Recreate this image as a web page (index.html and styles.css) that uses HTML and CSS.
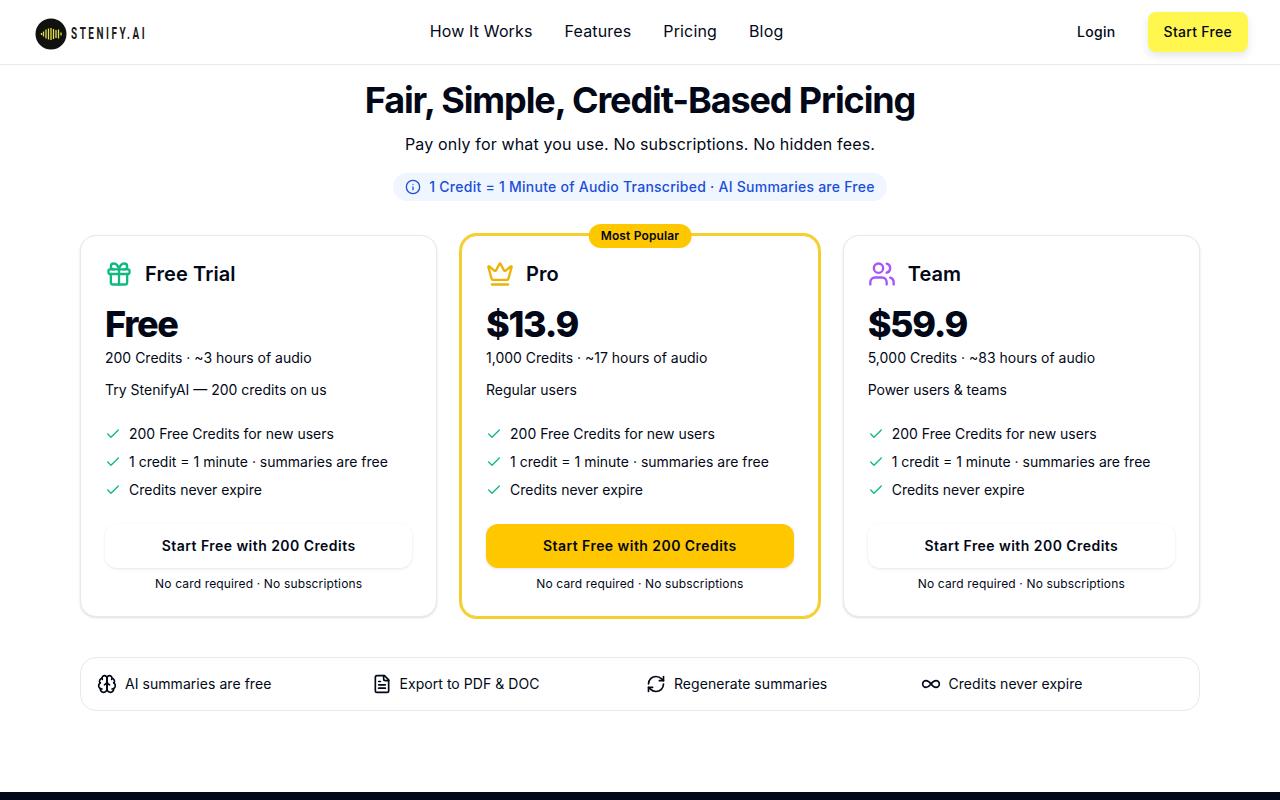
FILE: index.html
```html
<!doctype html>
<html lang="en">
  <head>
    <meta charset="UTF-8" />
    <meta name="viewport" content="width=device-width, initial-scale=1.0" />
    <title>Stenify.AI - Pricing</title>
    <link rel="stylesheet" href="styles.css">
  </head>
  <body>
    <header class="site-header">
      <a class="logo" href="#">
        <svg class="logo-mark" viewBox="0 0 32 32" width="32" height="32">
          <circle cx="16" cy="16" r="15.5" fill="#111110" />
          <path d="M6.500 15v2M8.500 13.500v5M11 11.500v9M13.500 10.500v11M16 10v12M18.500 11v10M21 12v8M23.500 11.500v9M26 14.500v3" stroke="#e6e24c" stroke-width="1.300" fill="none" />
        </svg>
        <span class="logo-text">STENIFY.AI</span>
      </a>
      <nav class="main-nav">
        <a href="#">How It Works</a>
        <a href="#">Features</a>
        <a href="#">Pricing</a>
        <a href="#">Blog</a>
      </nav>
      <div class="header-actions">
        <a class="login" href="#">Login</a>
        <a class="start-free" href="#">Start Free</a>
      </div>
    </header>

    <main class="pricing">
      <h1 class="pricing-title">Fair, Simple, Credit-Based Pricing</h1>
      <p class="pricing-sub">Pay only for what you use. No subscriptions. No hidden fees.</p>
      <div class="pill-row">
        <div class="info-pill">
          <svg class="icon icon-16" viewBox="0 0 24 24"><circle cx="12" cy="12" r="10" /><path d="M12 16v-4" /><path d="M12 8h.01" /></svg>
          <span class="pill-text">1 Credit = 1 Minute of Audio Transcribed · AI Summaries are Free</span>
        </div>
      </div>

      <div class="plans">
        <section class="plan">
          <div class="plan-head">
            <svg class="icon plan-icon green" viewBox="0 0 24 24"><rect x="3" y="8" width="18" height="4" rx="1" /><path d="M12 8v13" /><path d="M19 12v7a2 2 0 0 1-2 2H7a2 2 0 0 1-2-2v-7" /><path d="M7.500 8a2.500 2.500 0 0 1 0-5A4.800 8 0 0 1 12 8a4.800 8 0 0 1 4.500-5 2.500 2.500 0 0 1 0 5" /></svg>
            <h2>Free Trial</h2>
          </div>
          <div class="price">Free</div>
          <div class="credits">200 Credits · ~3 hours of audio</div>
          <div class="audience">Try StenifyAI — 200 credits on us</div>
          <ul class="perks">
            <li><svg class="icon icon-16 check" viewBox="0 0 24 24"><path d="M20 6 9 17l-5-5" /></svg>200 Free Credits for new users</li>
            <li><svg class="icon icon-16 check" viewBox="0 0 24 24"><path d="M20 6 9 17l-5-5" /></svg>1 credit = 1 minute · summaries are free</li>
            <li><svg class="icon icon-16 check" viewBox="0 0 24 24"><path d="M20 6 9 17l-5-5" /></svg>Credits never expire</li>
          </ul>
          <a class="plan-btn" href="#">Start Free with 200 Credits</a>
          <div class="plan-note">No card required · No subscriptions</div>
        </section>

        <section class="plan plan-pro">
          <span class="badge">Most Popular</span>
          <div class="plan-head">
            <svg class="icon plan-icon amber" viewBox="0 0 24 24"><path d="M11.562 3.266a.5.5 0 0 1 .876 0L15.390 8.870a1 1 0 0 0 1.516.294L21.183 5.500a.5.5 0 0 1 .798.519l-2.834 10.246a1 1 0 0 1-.956.734H5.810a1 1 0 0 1-.957-.734L2.020 6.020a.5.5 0 0 1 .798-.519l4.276 3.664a1 1 0 0 0 1.516-.294z" /><path d="M5 21h14" /></svg>
            <h2>Pro</h2>
          </div>
          <div class="price">$13.9</div>
          <div class="credits">1,000 Credits · ~17 hours of audio</div>
          <div class="audience">Regular users</div>
          <ul class="perks">
            <li><svg class="icon icon-16 check" viewBox="0 0 24 24"><path d="M20 6 9 17l-5-5" /></svg>200 Free Credits for new users</li>
            <li><svg class="icon icon-16 check" viewBox="0 0 24 24"><path d="M20 6 9 17l-5-5" /></svg>1 credit = 1 minute · summaries are free</li>
            <li><svg class="icon icon-16 check" viewBox="0 0 24 24"><path d="M20 6 9 17l-5-5" /></svg>Credits never expire</li>
          </ul>
          <a class="plan-btn plan-btn-primary" href="#">Start Free with 200 Credits</a>
          <div class="plan-note">No card required · No subscriptions</div>
        </section>

        <section class="plan">
          <div class="plan-head">
            <svg class="icon plan-icon purple" viewBox="0 0 24 24"><path d="M16 21v-2a4 4 0 0 0-4-4H6a4 4 0 0 0-4 4v2" /><circle cx="9" cy="7" r="4" /><path d="M22 21v-2a4 4 0 0 0-3-3.870" /><path d="M16 3.130a4 4 0 0 1 0 7.750" /></svg>
            <h2>Team</h2>
          </div>
          <div class="price">$59.9</div>
          <div class="credits">5,000 Credits · ~83 hours of audio</div>
          <div class="audience">Power users &amp; teams</div>
          <ul class="perks">
            <li><svg class="icon icon-16 check" viewBox="0 0 24 24"><path d="M20 6 9 17l-5-5" /></svg>200 Free Credits for new users</li>
            <li><svg class="icon icon-16 check" viewBox="0 0 24 24"><path d="M20 6 9 17l-5-5" /></svg>1 credit = 1 minute · summaries are free</li>
            <li><svg class="icon icon-16 check" viewBox="0 0 24 24"><path d="M20 6 9 17l-5-5" /></svg>Credits never expire</li>
          </ul>
          <a class="plan-btn" href="#">Start Free with 200 Credits</a>
          <div class="plan-note">No card required · No subscriptions</div>
        </section>
      </div>

      <div class="features">
        <div class="feature">
          <svg class="icon icon-20" viewBox="0 0 24 24"><path d="M12 5a3 3 0 1 0-5.997.125 4 4 0 0 0-2.526 5.770 4 4 0 0 0 .556 6.588A4 4 0 1 0 12 18Z" /><path d="M12 5a3 3 0 1 1 5.997.125 4 4 0 0 1 2.526 5.770 4 4 0 0 1-.556 6.588A4 4 0 1 1 12 18Z" /><path d="M15 13a4.500 4.500 0 0 1-3-4 4.500 4.500 0 0 1-3 4" /><path d="M17.599 6.500a3 3 0 0 0 .399-1.375" /><path d="M6.003 5.125A3 3 0 0 0 6.401 6.500" /><path d="M3.477 10.896a4 4 0 0 1 .585-.396" /><path d="M19.938 10.500a4 4 0 0 1 .585.396" /><path d="M6 18a4 4 0 0 1-1.967-.516" /><path d="M19.967 17.484A4 4 0 0 1 18 18" /></svg>
          <span>AI summaries are free</span>
        </div>
        <div class="feature">
          <svg class="icon icon-20" viewBox="0 0 24 24"><path d="M15 2H6a2 2 0 0 0-2 2v16a2 2 0 0 0 2 2h12a2 2 0 0 0 2-2V7Z" /><path d="M14 2v4a2 2 0 0 0 2 2h4" /><path d="M10 9H8" /><path d="M16 13H8" /><path d="M16 17H8" /></svg>
          <span>Export to PDF &amp; DOC</span>
        </div>
        <div class="feature">
          <svg class="icon icon-20" viewBox="0 0 24 24"><path d="M3 12a9 9 0 0 1 9-9 9.750 9.750 0 0 1 6.740 2.740L21 8" /><path d="M21 3v5h-5" /><path d="M21 12a9 9 0 0 1-9 9 9.750 9.750 0 0 1-6.740-2.740L3 16" /><path d="M8 16H3v5" /></svg>
          <span>Regenerate summaries</span>
        </div>
        <div class="feature">
          <svg class="icon icon-20" viewBox="0 0 24 24"><path d="M12 12c-2-2.670-4-4-6-4a4 4 0 1 0 0 8c2 0 4-1.330 6-4Zm0 0c2 2.670 4 4 6 4a4 4 0 0 0 0-8c-2 0-4 1.330-6 4Z" /></svg>
          <span>Credits never expire</span>
        </div>
      </div>
    </main>

    <footer class="site-footer"></footer>
  </body>
</html>
```

FILE: styles.css
```css
* {
  box-sizing: border-box;
}

body {
  margin: 0;
  background: #fff;
  color: #020817;
  font-family: Inter, 'Liberation Sans', sans-serif;
}

a {
  color: inherit;
  text-decoration: none;
}

.icon {
  flex: none;
  fill: none;
  stroke: currentColor;
  stroke-width: 2;
  stroke-linecap: round;
  stroke-linejoin: round;
}

.icon-16 {
  width: 16px;
  height: 16px;
}

.icon-20 {
  width: 20px;
  height: 20px;
}

/* header */
.site-header {
  height: 65px;
  padding: 0 32px;
  display: flex;
  align-items: center;
  justify-content: space-between;
  border-bottom: 1px solid #e7e9ed;
  background: #fff;
}

.logo {
  width: 120px;
  display: flex;
  align-items: center;
  gap: 4px;
  padding: 3px 0 0 3px;
}

.logo-mark {
  flex: none;
}

.logo-text {
  font-family: Roboto, 'Liberation Sans', sans-serif;
  font-size: 16px;
  font-weight: 700;
  letter-spacing: 4.1px;
  color: #1b1b1b;
  white-space: nowrap;
  transform: scaleX(0.62);
  transform-origin: left center;
}

.main-nav {
  display: flex;
  gap: 32px;
  font-size: 16px;
  letter-spacing: 0.15px;
  margin-top: -2px;
}

.header-actions {
  display: flex;
  align-items: center;
  gap: 16px;
  font-size: 14px;
  font-weight: 500;
  letter-spacing: 0.3px;
}

.login {
  padding: 0 16px;
  line-height: 40px;
}

.start-free {
  height: 40px;
  padding: 0 16px;
  line-height: 40px;
  border-radius: 8px;
  background: #fff74d;
  box-shadow: 0 4px 10px rgba(0, 0, 0, 0.1);
}

/* pricing */
.pricing {
  width: 1120px;
  margin: 0 auto;
  padding-top: 15px;
}

.pricing-title {
  margin: 0;
  font-size: 36px;
  line-height: 40px;
  font-weight: 700;
  letter-spacing: -1.1px;
  text-align: center;
}

.pricing-sub {
  margin: 12px 0 0;
  font-size: 16px;
  line-height: 24px;
  letter-spacing: 0.15px;
  text-align: center;
}

.pill-row {
  display: flex;
  justify-content: center;
  margin-top: 17px;
}

.info-pill {
  height: 28px;
  padding: 0 12px;
  display: flex;
  align-items: center;
  gap: 8px;
  border-radius: 14px;
  background: #eff6ff;
  color: #1d4ed8;
  font-size: 14px;
  font-weight: 500;
  letter-spacing: 0.25px;
}

.pill-text {
  margin-top: -1px;
}

.plans {
  display: grid;
  grid-template-columns: repeat(3, 1fr);
  gap: 24px;
  margin-top: 34px;
}

.plan {
  position: relative;
  padding: 24px;
  border: 1px solid #e7e9ed;
  border-radius: 16px;
  background: #fff;
  box-shadow: 0 1px 3px rgba(0, 0, 0, 0.1), 0 1px 2px -1px rgba(0, 0, 0, 0.1);
}

.plan-pro {
  padding-left: 23.7px;
  border-color: #f5cf2e;
  box-shadow: 0 0 0 2px #f5cf2e;
}

.badge {
  position: absolute;
  top: -12px;
  left: 50%;
  transform: translateX(-50%);
  height: 24px;
  padding: 0 12px;
  border-radius: 12px;
  background: #ffc700;
  font-size: 12px;
  font-weight: 600;
  line-height: 24px;
  letter-spacing: 0.15px;
  white-space: nowrap;
}

.plan-head {
  display: flex;
  align-items: center;
  gap: 12px;
  height: 28px;
}

.plan-head h2 {
  margin: 0;
  font-size: 20px;
  font-weight: 600;
  line-height: 28px;
  letter-spacing: 0.1px;
}

.plan-icon {
  width: 28px;
  height: 28px;
}

.green {
  color: #10b981;
}

.amber {
  color: #eab308;
}

.purple {
  color: #a855f7;
}

.price {
  margin-top: 16px;
  font-size: 36px;
  line-height: 40px;
  font-weight: 800;
  letter-spacing: -1.3px;
}

.credits {
  margin-top: 4px;
  font-size: 14px;
  line-height: 20px;
}

.audience {
  margin-top: 12px;
  font-size: 14px;
  line-height: 20px;
}

.perks {
  list-style: none;
  margin: 24px 0 0;
  padding: 0;
  display: flex;
  flex-direction: column;
  gap: 8px;
}

.perks li {
  display: flex;
  align-items: center;
  gap: 8px;
  font-size: 14px;
  line-height: 20px;
}

.check {
  color: #10b981;
}

.plan-btn {
  display: block;
  height: 44px;
  margin-top: 24px;
  border-radius: 12px;
  background: #fff;
  box-shadow: 0 1px 3px rgba(0, 0, 0, 0.1);
  font-size: 14px;
  font-weight: 600;
  line-height: 44px;
  letter-spacing: 0.45px;
  text-align: center;
}

.plan-btn-primary {
  background: #ffc700;
}

.plan-note {
  margin-top: 8px;
  font-size: 12px;
  line-height: 16px;
  letter-spacing: 0.15px;
  text-align: center;
}

/* bottom strip */
.features {
  display: grid;
  grid-template-columns: repeat(4, 1fr);
  gap: 12px;
  margin-top: 40px;
  padding: 16px;
  border: 1px solid #e7e9ed;
  border-radius: 16px;
}

.feature {
  display: flex;
  align-items: center;
  gap: 8px;
  font-size: 14px;
  line-height: 20px;
  letter-spacing: 0.05px;
}

.site-footer {
  height: 8px;
  margin-top: 81px;
  background: #020817;
}
```
